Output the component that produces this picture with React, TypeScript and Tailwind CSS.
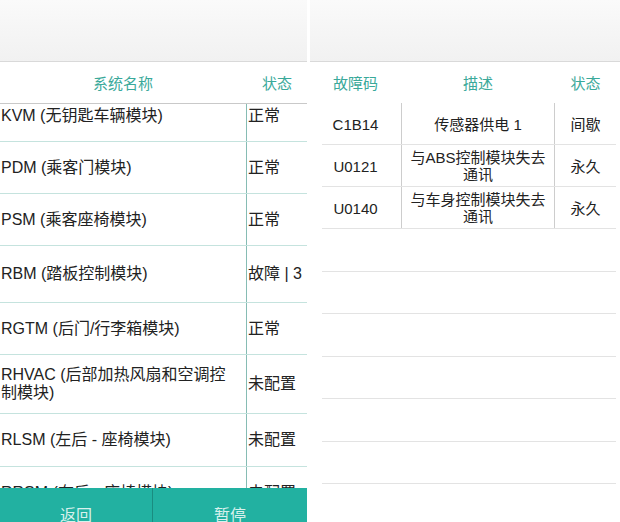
import React from "react";

const FONT = { fontFamily: '"Liberation Sans", "Noto Sans CJK SC", sans-serif' };

const leftRows: { name: React.ReactNode; status: string; h: string }[] = [
  { name: "KVM (无钥匙车辆模块)", status: "正常", h: "h-[51px]" },
  { name: "PDM (乘客门模块)", status: "正常", h: "h-[52px]" },
  { name: "PSM (乘客座椅模块)", status: "正常", h: "h-[52px]" },
  { name: "RBM (踏板控制模块)", status: "故障 | 3", h: "h-[57px]" },
  { name: "RGTM (后门/行李箱模块)", status: "正常", h: "h-[52px]" },
  { name: "RHVAC (后部加热风扇和空调控制模块)", status: "未配置", h: "h-[59px]" },
  { name: "RLSM (左后 - 座椅模块)", status: "未配置", h: "h-[53px]" },
  { name: "RRSM (右后 - 座椅模块)", status: "未配置", h: "h-[52px]" },
];

const rightRows = [
  { code: "C1B14", desc: "传感器供电 1", status: "间歇" },
  { code: "U0121", desc: "与ABS控制模块失去通讯", status: "永久" },
  { code: "U0140", desc: "与车身控制模块失去通讯", status: "永久" },
];

export default function App() {
  return (
    <div className="w-[620px] h-[522px] flex bg-white overflow-hidden text-[#222]" style={FONT}>
      {/* Left panel */}
      <div className="w-[307px] h-full flex flex-col">
        <div className="h-[62px] shrink-0 bg-gradient-to-b from-[#fafafa] to-[#f1f1f1] border-b border-[#d9d9d9]" />
        <div className="h-[42px] shrink-0 flex items-center pt-[3px] border-b border-[#c9c9c9] text-[15px] text-[#3aa99a]">
          <div className="w-[246px] text-center">系统名称</div>
          <div className="flex-1 text-center pl-[1px]">状态</div>
        </div>
        <div className="flex-1 overflow-hidden">
          <div className="-mt-[13px]">
            {leftRows.map((r, i) => (
              <div key={i} className={`${r.h} flex border-b border-[#c5e3de]`}>
                <div className="w-[246px] flex items-center pl-[1px] pr-2 text-[16px] leading-[18px]">
                  <span>{r.name}</span>
                </div>
                <div className="flex-1 flex items-center border-l border-[#86bcb4] pl-[1px] text-[16px] whitespace-nowrap">
                  {r.status}
                </div>
              </div>
            ))}
          </div>
        </div>
        <div className="h-[34px] shrink-0 flex bg-[#22b1a1] text-[16px] leading-[18px] text-[#d9f1ed] overflow-hidden">
          <div className="w-[153px] flex items-start justify-center pt-[19px] border-r border-[#1a8c80]">返回</div>
          <div className="flex-1 flex items-start justify-center pt-[19px]">暂停</div>
        </div>
      </div>

      <div className="w-[3px] shrink-0" />

      {/* Right panel */}
      <div className="flex-1 h-full flex flex-col">
        <div className="h-[62px] shrink-0 bg-gradient-to-b from-[#fafafa] to-[#f1f1f1] border-b border-[#d9d9d9]" />
        <div className="h-[41px] shrink-0 flex items-center pt-[3px] text-[15px] text-[#3aa99a] pr-[4px]">
          <div className="w-[91px] text-center">故障码</div>
          <div className="w-[154px] text-center">描述</div>
          <div className="flex-1 text-center">状态</div>
        </div>
        <div className="pr-[4px]">
          {rightRows.map((r, i) => (
            <div key={i} className="h-[42px] flex relative">
              <div className="w-[91px] flex items-center justify-center pt-[2px] text-[15px]">{r.code}</div>
              <div className="w-[154px] flex items-center justify-center text-center text-[15px] leading-[17px] border-l border-r border-[#cdcdcd] px-[6px]">
                {r.desc}
              </div>
              <div className="flex-1 flex items-center justify-center pt-[2px] text-[15px]">{r.status}</div>
              <div className="absolute bottom-0 left-[12px] right-0 h-px bg-[#e3e3e3]" />
            </div>
          ))}
          {[0, 1, 2, 3, 4, 5].map((i) => (
            <div key={i} className={`${i % 2 === 0 ? "h-[43px]" : "h-[42px]"} relative`}>
              <div className="absolute bottom-0 left-[12px] right-0 h-px bg-[#e3e3e3]" />
            </div>
          ))}
        </div>
      </div>
    </div>
  );
}
